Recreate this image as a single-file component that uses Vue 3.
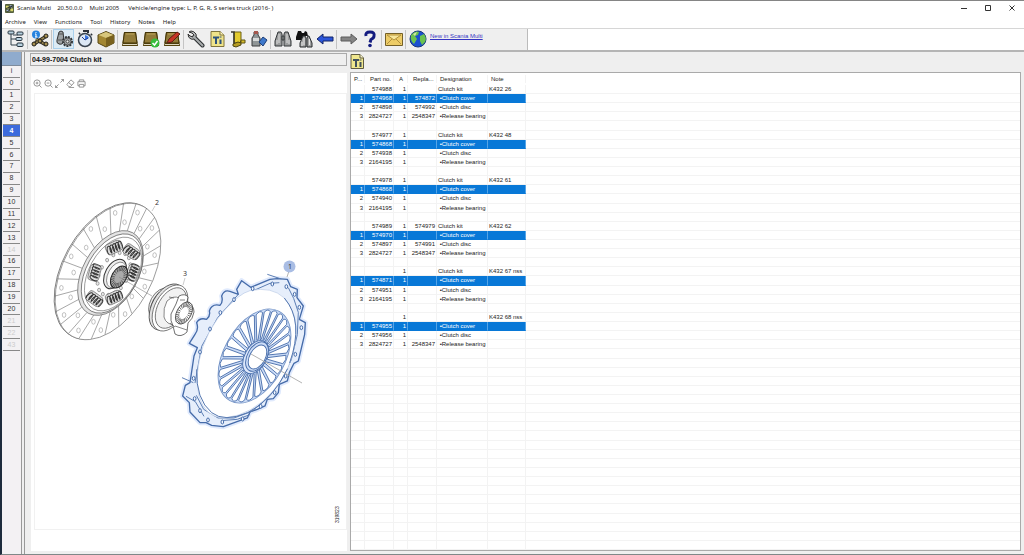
<script setup>
const menus = ['Archive', 'View', 'Functions', 'Tool', 'History', 'Notes', 'Help']

const toolGroups = [
  ['tree'],
  ['infoparts'],
  ['parts', 'clock', 'box'],
  ['book', 'bookok', 'bookedit'],
  ['wrench', 'ti', 'cart', 'bottle'],
  ['binoc', 'binocs', 'back'],
  ['forward', 'help'],
  ['mail'],
  ['globe']
]

const groups = ['i', '0', '1', '2', '3', '4', '5', '6', '7', '8', '9', '10', '11', '12', '13', '14', '16', '17', '18', '19', '20', '21', '22', '43']
const emptyGroups = ['14', '21', '22', '43']

const headings = ['P...', 'Part no.', 'A', 'Repla...', 'Designation', 'Note']
const kits = [
  ['574988', '', 'Clutch kit', 'K432 26', '574968', '574872', '574898', '574992', '2824727', '2548347'],
  ['574977', '', 'Clutch kit', 'K432 48', '574868', '', '574938', '', '2164195', ''],
  ['574978', '', 'Clutch kit', 'K432 61', '574868', '', '574940', '', '2164195', ''],
  ['574989', '574979', 'Clutch kit', 'K432 62', '574970', '', '574897', '574991', '2824727', '2548347'],
  ['', '', 'Clutch kit', 'K432 67 nss', '574871', '', '574951', '', '2164195', ''],
  ['', '', '', 'K432 68 nss', '574955', '', '574956', '', '2824727', '2548347']
]
const rows = []
kits.forEach((k) => {
  rows.push({ cells: ['', k[0], '1', k[1], k[2], k[3]] })
  rows.push({ cells: ['1', k[4], '1', k[5], ' •Clutch cover', ''], on: true })
  rows.push({ cells: ['2', k[6], '1', k[7], ' •Clutch disc', ''] })
  rows.push({ cells: ['3', k[8], '1', k[9], ' •Release bearing', ''] })
  rows.push({ cells: ['', '', '', '', '', ''] })
})
while (rows.length < 51) rows.push({ cells: ['', '', '', '', '', ''] })

/* Geometry of circles seen at an angle: local ellipse tilted 29 degrees. */
const TILT = (29 * Math.PI) / 180
const RATIO = 0.6
function pt(cx, cy, ry, deg) {
  const a = (deg * Math.PI) / 180
  const x = ry * RATIO * Math.cos(a)
  const y = ry * Math.sin(a)
  return [
    +(cx + x * Math.cos(TILT) - y * Math.sin(TILT)).toFixed(2),
    +(cy + x * Math.sin(TILT) + y * Math.cos(TILT)).toFixed(2)
  ]
}
function ring(cx, cy, ry) {
  return { rx: +(ry * RATIO).toFixed(2), ry, transform: `translate(${cx} ${cy}) rotate(29)` }
}
function range(n) {
  return Array.from({ length: n }, (_, i) => i)
}

const discLines = range(24).map((i) => {
  const d = i * 15 + 4
  return 'M' + pt(110.5, 273, 46, d - 1) + 'L' + pt(107.5, 271, 74, d + 1)
}).join('')
const discRivets = range(24).flatMap((i) => {
  const d = i * 15 + 11
  return i % 2 ? [pt(108, 271.5, 66, d)] : [pt(109, 272, 54, d)]
})
const plateHoles = range(16).map((i) => pt(114, 274, 23, i * 22.5))
const springs = [
  [114, 248, -25], [131, 252, 35], [95, 273, -75], [133, 273, -70], [94, 299, 35], [114, 298, -25]
]
const coil = range(5).map((i) => `M${i * 3 - 7} 4c-1.500-3 .5-8 2.500-8s1.500 5 .5 8`).join('')

const petals = range(26).map((i) => {
  const d = (i * 360) / 26
  const a = pt(255.5, 357, 19, d - 2.5)
  const b = pt(254.5, 356, 48, d - 5.5)
  const q = pt(254.5, 356, 52, d)
  const c = pt(254.5, 356, 48, d + 5.5)
  const e = pt(255.5, 357, 19, d + 2.5)
  return `M${a}L${b}Q${q} ${c}L${e}Z`
}).join('')
const splines = (cx, cy, r, n) => range(n).map((i) => 'M' + pt(cx, cy, r * 0.55, (i * 360) / n) + 'L' + pt(cx, cy, r, (i * 360) / n)).join('')
const hubSplines = splines(119, 277, 12, 22)
const bearingSplines = splines(184, 313, 12, 26)

const coverOutline = 'M242 94 L300 70 L322 68 L352 70 L362 92 L382 100 L381 125 L400 150 L388 190 L406 200 L404 235 L385 315 L372 322 L358 350 L352 375 L328 385 L325 410 L310 428 L292 430 L285 450 L262 460 L240 468 L232 486 L160 512 L125 508 L108 500 L90 500 L60 468 L58 440 L38 420 L46 388 L60 380 L72 300 L82 275 L58 262 L75 235 Q87 220 80 200 Q88 184 110 190 Q122 180 118 165 Q125 142 150 148 Q160 138 155 120 Q162 100 180 106 L205 115 L200 100 L215 74 Z'
const tabHoles = [
  [248, 98], [307, 84], [349, 92], [374, 115], [388, 154], [394, 215], [376, 295], [347, 360], [314, 410], [272, 451], [218, 489], [157, 498], [114, 492], [90, 464], [74, 428], [71, 367], [90, 288], [120, 219], [151, 170], [192, 131]
]
</script>

<template>
  <div class="window">
    <header class="titlebar">
      <svg class="appicon" viewBox="0 0 10 10"><rect width="10" height="10" rx="1" fill="#55613f" /><path d="M1 2h3v3H1zM6 5h3v3H6z" fill="#d8d66b" /><path d="M5 1l4 1-2 3zM1 7l3-1 1 3z" fill="#a7b6d8" /><path d="M1 5l8-3M3 9l5-7" stroke="#252c2c" /></svg>
      <span class="app">Scania Multi</span>
      <span class="version">20.50.0.0</span>
      <span class="edition">Multi 2005</span>
      <span class="vehicle">Vehicle/engine type: L, P, G, R, S series truck (2016- )</span>
      <div class="winbtns">
        <button aria-label="Minimize"><svg viewBox="0 0 8 8"><path d="M1 4.500h6" /></svg></button>
        <button aria-label="Maximize"><svg viewBox="0 0 8 8"><path d="M1.500 1.500h5v5h-5z" /></svg></button>
        <button aria-label="Close"><svg viewBox="0 0 8 8"><path d="M1.500 1.500l5 5M6.500 1.500l-5 5" /></svg></button>
      </div>
    </header>

    <nav class="menubar">
      <button v-for="m in menus" :key="m">{{ m }}</button>
    </nav>

    <div class="toolrow">
      <div class="toolbar">
        <template v-for="(g, gi) in toolGroups" :key="gi">
          <i v-if="gi" class="sep"></i>
          <button v-for="t in g" :key="t" class="tool" :class="{ active: t === 'parts' }" :aria-label="t">
            <svg viewBox="0 0 18 18">
              <g v-if="t === 'tree'">
                <path d="M4 4v11h6M4 9h6M6 5h5" fill="none" stroke="#33424d" />
                <g fill="#b9d2e0" stroke="#26343f"><rect x="1" y="1" width="6" height="3" rx="1" /><rect x="10" y="2" width="6" height="3" rx="1" /><rect x="9" y="7.500" width="6" height="3" rx="1" /><rect x="10" y="13" width="6" height="3.500" rx="1" /></g>
              </g>
              <g v-else-if="t === 'infoparts'">
                <path d="M3 14l11-7M5 9l10 6" stroke="#2b2820" stroke-width="3.500" /><path d="M3 14l11-7M5 9l10 6" stroke="#96834c" stroke-width="1.500" />
                <g fill="#a8914f" stroke="#1f1e19"><circle cx="3" cy="14" r="2" /><circle cx="15" cy="6" r="2" /><circle cx="9" cy="11" r="2" /><circle cx="15" cy="14" r="2" /></g>
                <circle cx="5" cy="4.500" r="4" fill="#2583df" /><path d="M5 2v1M4 4h1v3M4 7h2.500" stroke="#fff" fill="none" />
              </g>
              <g v-else-if="t === 'parts'">
                <path d="M4 2q2-2 4 0l1 9q-1 4-5 3-3-1-2-4z" fill="#9da2a4" stroke="#333" /><path d="M4 4h4M3 10h5" stroke="#555" /><circle cx="12.500" cy="11.500" r="4.500" fill="#a8acae" stroke="#303437" stroke-width="2" stroke-dasharray="2 1" /><circle cx="12.500" cy="11.500" r="3.500" fill="#a8acae" stroke="#555" /><circle cx="12.500" cy="11.500" r="1.500" fill="#eee" stroke="#444" />
              </g>
              <g v-else-if="t === 'clock'">
                <path d="M7 1h5v2M3 4l1-1M15 5l1-1" stroke="#2b3038" stroke-width="2" fill="none" /><circle cx="9" cy="10" r="6.500" fill="#dce7f4" stroke="#39434f" stroke-width="1.500" /><path d="M9 10V5a5 5 0 014 3z" fill="#3975df" /><path d="M9 10L6 7M9 10l3-2" stroke="#1c3c98" />
              </g>
              <g v-else-if="t === 'box'">
                <path d="M1 5l8-3.500L17 5v8l-8 4-8-4z" fill="#a38732" stroke="#574713" /><path d="M1.500 5L9 2l7.500 3L9 8z" fill="#d8c77c" /><path d="M9 8l7.500-3v8L9 16.500z" fill="#79611e" />
              </g>
              <g v-else-if="t.startsWith('book')">
                <path d="M3 2h12l2 14H1z" fill="#55440f" /><path d="M3.500 2.500h11L16 13H2z" fill="#927b39" stroke="#433407" /><path d="M5 4h8" stroke="#bba45d" /><path d="M2 14.500h14" stroke="#ddd6bc" />
                <template v-if="t === 'bookok'"><circle cx="13" cy="13" r="4.500" fill="#37bd3c" /><path d="M10.500 13l2 2 3-4" fill="none" stroke="#fff" stroke-width="1.500" /></template>
                <path v-if="t === 'bookedit'" d="M4 13l2-4 8-7 3 2-8 8z" fill="#c53524" stroke="#5d2017" />
              </g>
              <g v-else-if="t === 'wrench'">
                <path d="M7 7l8.500 8.500" stroke="#2d3032" stroke-width="4" stroke-linecap="round" /><path d="M2 2l3 1 2 2-1 2-3-1-2-2q0 4 3 5 2 1 4-1 2-2 1-4-2-3-5-3z" fill="#b5b8b9" stroke="#333" /><path d="M7 7l8.500 8.500" stroke="#a9adae" stroke-width="2" stroke-linecap="round" />
              </g>
              <g v-else-if="t === 'ti'">
                <path d="M3 1.500h9L16 5v11.500H3z" fill="#efe389" stroke="#80743d" /><path d="M12 1.500V5h4" fill="#fff6bc" stroke="#80743d" /><path d="M5 7.500h6M8 7.500V14M12.500 9.500V14" stroke="#2c527d" stroke-width="2" /><path d="M11.500 7h2" stroke="#2c527d" />
              </g>
              <g v-else-if="t === 'cart'">
                <path d="M5 2h7v11H5z" fill="#e3cb2f" stroke="#6d6114" /><path d="M2 2h3v12M11 12h5" stroke="#38382e" stroke-width="1.500" fill="none" /><path d="M4 14l5-2 3 1v2l-5 2-3-1z" fill="#b59c22" stroke="#4c4410" /><path d="M12 10h4v3h-4z" fill="#d7bd2c" stroke="#5d5314" />
              </g>
              <g v-else-if="t === 'bottle'">
                <path d="M4 2h4v3l2 3v8H2V8l2-3z" fill="#8f9596" stroke="#3b3d3e" /><path d="M4 1h4v3H4z" fill="#a5574d" /><path d="M3 8h6v3H3z" fill="#d7dada" /><path d="M9 12l4-5 4 3-4 6z" fill="#3e78cb" stroke="#1d3d75" />
              </g>
              <g v-else-if="t === 'binoc'" fill="#9a9c9c" stroke="#34383a">
                <path d="M4 2h3l1 2v12H1V11zM14 2h-3l-1 2v12h7v-5z" /><path d="M8 6h2v4H8z" /><path d="M5 4v9M3 10v4M13 4v9M15 10v4" stroke="#dedede" />
              </g>
              <g v-else-if="t === 'binocs'">
                <path d="M3 1h3l1 2h2l1-2 2 1 1 4H8v4H1V7z" fill="#111" /><path d="M8 6h2l1 2v9H5v-4zM14 6h-1l-1 2v9h5v-4z" fill="#a3a4a4" stroke="#292c2e" /><path d="M9 8v7M7 12v4M14.500 9v6" stroke="#e4e4e4" />
              </g>
              <path v-else-if="t === 'back'" d="M1 9l6-5v3h10v4H7v3z" fill="#2b55d8" stroke="#122466" />
              <path v-else-if="t === 'forward'" d="M17 9l-6-5v3H1v4h10v3z" fill="#858585" stroke="#5d5d5d" />
              <g v-else-if="t === 'help'"><path d="M5 6q-1-4 4-4 5 0 4 4 0 2-3 3.500l-1 3" fill="none" stroke="#141c80" stroke-width="3" /><circle cx="9" cy="15.500" r="1.800" fill="#141c80" /></g>
              <g v-else-if="t === 'mail'"><path d="M.5 3.500h17v12H.5z" fill="#edcc67" stroke="#746028" /><path d="M2 5l7 5 7-5zM2 14l5-5M16 14l-5-5" fill="#f8e79c" stroke="#b2913d" /></g>
              <g v-else>
                <circle cx="9" cy="9" r="8" fill="#1b50cf" stroke="#18367b" /><path d="M2 5q4-5 8-3l-1 3-3 1 2 3-3 5Q1 11 2 5zM11 6l4-2q3 4 1 8l-3 3-2-4z" fill="#6bc34f" /><path d="M4 4l4-2-2 4z" fill="#d6eaa5" />
              </g>
            </svg>
          </button>
        </template>
        <a href="#">New in Scania Multi</a>
      </div>
    </div>

    <main class="body">
      <aside class="side">
        <div class="sidehead"></div>
        <div class="groups">
          <button v-for="g in groups" :key="g" :class="{ on: g === '4', off: emptyGroups.includes(g) }"><span>{{ g }}</span></button>
        </div>
      </aside>

      <section class="left">
        <input class="kit" value="04-99-7004 Clutch kit" readonly aria-label="Selected part group" />
        <div class="viewer">
          <div class="viewtools">
            <button aria-label="Zoom in"><svg viewBox="0 0 10 10"><circle cx="4.500" cy="4.500" r="3.500" /><path d="M7 7l2.500 2.500M3 4.500h3M4.500 3v3" /></svg></button>
            <button aria-label="Zoom out"><svg viewBox="0 0 10 10"><circle cx="4.500" cy="4.500" r="3.500" /><path d="M7 7l2.500 2.500M3 4.500h3" /></svg></button>
            <button aria-label="Fit"><svg viewBox="0 0 10 10"><path d="M6 4l3.500-3.500M7 .5h2.500V3M4 6L.5 9.500M.5 7v2.500H3" /></svg></button>
            <button aria-label="Erase"><svg viewBox="0 0 10 10"><path d="M1 6l4.500-5L9 4 5 8.500H3zM3 4l3.500 3M3 9.500h6" /></svg></button>
            <button aria-label="Print"><svg viewBox="0 0 10 10"><path d="M2.500 3V1h5v2M2.500 7.500H1V3h8v4.500H7.500M2.500 6h5v3h-5z" /></svg></button>
          </div>
          <div class="frame">
            <svg class="drawing" viewBox="35 94 311 435" preserveAspectRatio="xMinYMin meet">
              <g fill="none" stroke="#6b6b6b" stroke-width=".6">
                <ellipse v-bind="ring(107, 271, 74)" fill="#fff" stroke="#444" />
                <ellipse v-bind="ring(108, 271.500, 74)" fill="#fff" />
                <path :d="discLines" />
                <ellipse v-for="(r, i) in discRivets" :key="i" :cx="r[0]" :cy="r[1]" rx="1.800" ry="2.400" stroke="#999" />
                <ellipse v-bind="ring(110.500, 273, 46)" fill="#e4e4e4" stroke="#555" />
                <ellipse v-bind="ring(112, 273.500, 43)" fill="#fff" stroke="#444" />
                <ellipse v-bind="ring(113, 274, 40)" />
                <ellipse v-for="(r, i) in plateHoles" :key="'h' + i" :cx="r[0]" :cy="r[1]" rx="1.500" ry="1.800" fill="#e9e9e9" />
                <g v-for="(s, i) in springs" :key="'s' + i" :transform="`translate(${s[0]} ${s[1]}) rotate(${s[2]})`">
                  <rect x="-8" y="-6" width="16" height="11" rx="3" fill="#ddd" stroke="#555" />
                  <path :d="coil" stroke="#333" stroke-width="1" />
                </g>
                <ellipse v-bind="ring(115, 274, 16)" fill="#eee" stroke="#333" stroke-width="1" />
                <ellipse v-bind="ring(116.500, 275, 14)" fill="#fafafa" stroke="#555" />
                <ellipse v-bind="ring(119, 277, 12)" fill="#aaa" stroke="#222" stroke-width="1" />
                <path :d="hubSplines" stroke="#222" />
                <path d="M119 277l33 19M194 321l7 4" stroke="#888" />
                <path d="M152 211l3-5M183 285l2-7" stroke="#aaa" />
              </g>
              <g fill="#fff" stroke="#555" stroke-width=".7">
                <ellipse v-bind="ring(160, 303, 16)" fill="#eee" />
                <ellipse v-bind="ring(162, 304, 16)" />
                <ellipse v-bind="ring(167, 307, 25)" fill="#e2e2e2" stroke="#333" />
                <ellipse v-bind="ring(170, 308, 25)" />
                <ellipse v-bind="ring(171, 308, 22)" fill="#f2f2f2" />
                <path d="M167 301q7-6 12-3l4 3-7 24q-10 0-12-8-1-9 3-16z" />
                <path d="M176 304l3-8q6-3 9 1l-1 5q7 3 7 10-1 7-6 11l-1 9q-6 6-12 2l-2-8q-3-5-2-12z" stroke="#333" />
                <path d="M175 326l12 4M180 300h5M169 297l5 1M170 323l5 4" fill="none" />
                <ellipse v-bind="ring(184, 313, 12)" stroke="#333" />
                <path :d="bearingSplines" stroke="#333" />
                <path d="M194 321l12 6" stroke="#e1a2a2" />
              </g>
              <g transform="translate(170 256) scale(.3333)" stroke-linejoin="round">
                <path :d="coverOutline" fill="#e9f0fc" stroke="#e0eafd" stroke-width="15" />
                <path :d="coverOutline" fill="#e6eefb" stroke="#456ba9" stroke-width="4" />
                <path d="M250 104l50-22 28-2M355 95l16 32 14 42-3 67-18 75-28 58-42 54-48 43-54 20-48 0-43-26-22-42M205 115l-62 70-48 86-20 110M48 421l28 16 26 44M36 365l34 15M292 55l42 14M240 476l-38 14-48 4" fill="none" stroke="#5b7db4" stroke-width="3" />
                <path d="M240 104Q305 90 343 126 386 174 377 250 366 340 309 405 247 477 164 486 105 485 87 420 72 355 99 271 130 184 205 123 222 109 240 104Z" fill="#fff" stroke="#b9cae5" stroke-width="2" />
                <path d="M80 340q-3 90 45 130 38 30 108 0 73-35 120-132M343 126q60 70 16 195" fill="none" stroke="#5376b0" stroke-width="3" />
                <ellipse v-for="(h, i) in tabHoles" :key="i" :cx="h[0]" :cy="h[1]" rx="4" ry="6" fill="#f4f8ff" stroke="#456ba9" stroke-width="3" />
              </g>
              <g fill="#cbdcf7" stroke="#456ba9" stroke-width=".9">
                <ellipse v-bind="ring(254.500, 356, 51)" stroke="#7896c7" />
                <path :d="petals" fill="#fff" stroke-linejoin="round" />
                <ellipse v-bind="ring(255.500, 357, 18)" fill="#dce7fb" />
                <ellipse v-bind="ring(257, 356.500, 16)" />
                <ellipse v-bind="ring(257.500, 357, 13)" fill="#fff" />
                <path d="M251 354l51 29" stroke="#aaa" />
                <path d="M287 277l2-6" stroke="#aaa" />
              </g>
              <circle cx="289.500" cy="266.500" r="6" fill="#a9bde4" />
              <g class="callouts"><text x="288" y="269">1</text><text x="155" y="205">2</text><text x="183" y="276">3</text></g>
              <text class="figno" transform="translate(339 523) rotate(-90)">319823</text>
            </svg>
          </div>
        </div>
      </section>

      <section class="right">
        <div class="righttools">
          <button aria-label="Technical information"><svg viewBox="0 0 14 15"><path d="M1 .5h9L13.500 4v10.500H1z" fill="#efe78e" stroke="#5f5b42" /><path d="M10 .5V4h3.500" fill="#fffbd0" stroke="#5f5b42" /><path d="M3 6h6M6 6v7M10.500 8v5" stroke="#41515c" stroke-width="2" /><path d="M9.500 6h2" stroke="#41515c" /></svg></button>
        </div>
        <div class="tablebox">
          <table>
            <thead><tr><th v-for="h in headings" :key="h" scope="col">{{ h }}</th><td></td></tr></thead>
            <tbody>
              <tr v-for="(r, i) in rows" :key="i" :class="{ on: r.on }">
                <td v-for="(c, j) in r.cells" :key="j">{{ c }}</td><td></td>
              </tr>
            </tbody>
          </table>
        </div>
      </section>
    </main>
  </div>
</template>

<style>
html, body, #app { height: 100%; }
</style>

<style scoped>
* { box-sizing: border-box; }
button { border: 0; padding: 0; background: none; color: inherit; font: inherit; line-height: inherit; }
svg { display: block; }
.window {
  display: flex; flex-direction: column; height: 100%; overflow: hidden;
  border-top: 1px solid #858585; border-bottom: 1px solid #7f8888; border-left: 2px solid #1d2b3c;
  background: #efefef; color: #222; font: 6px/10px "Liberation Sans", Arial, sans-serif;
}
.titlebar { display: flex; align-items: center; height: 14px; padding-left: 3px; background: #fff; font-family: "Noto Sans", sans-serif; white-space: pre; flex: none; }
.appicon { width: 9px; height: 9px; margin-right: 3px; }
.app { margin-right: 6px; }
.version { margin-right: 7px; }
.edition { margin-right: 9px; }
.winbtns { display: flex; gap: 16px; margin-left: auto; padding-right: 8px; }
.winbtns svg { width: 8px; height: 8px; fill: none; stroke: #333; }
.menubar { display: flex; gap: 8px; height: 13px; padding: 2px 0 0 3px; background: #fff; font-family: "Noto Sans", sans-serif; flex: none; align-items: flex-start; }
.toolrow { height: 24px; background: #fff; border-top: 1px solid #d6d6d6; border-bottom: 2px solid #b5b5b5; flex: none; }
.toolbar { display: flex; width: 526px; height: 100%; padding-left: 3px; background: #efefef; border-right: 1px solid #bbb; }
.tool { display: grid; place-items: center; width: 21px; height: 20px; }
.tool.active { background: #dcebf5; border: 1px solid #a9d0ec; }
.tool svg { width: 18px; height: 18px; }
.sep { width: 1px; margin: 1px; background: #c4c4c4; }
.toolbar a { margin: 2px 0 0 2px; color: #3434c4; }
.body { display: flex; flex: 1; min-height: 0; }
.side { width: 20px; border-right: 1px solid #999; background: #f3f1f3; flex: none; }
.sidehead { height: 14px; background: #8fabcd; border-bottom: 1px solid #7d8b9c; }
.groups { display: grid; grid-auto-rows: 1fr; height: 285px; color: #333; }
.groups button { display: grid; place-items: center; margin: 0 1px; border-bottom: 1px solid #888; font-size: 7px; }
.groups .on { background: #3d6bdc; color: #fff; font-weight: bold; }
.groups .off { color: #ccc; }
.left { display: flex; flex-direction: column; margin-left: 2px; padding: 1px 0 3px 5px; border-left: 1px solid #999; flex: 0 0 323px; }
.kit { width: 100%; height: 13px; padding: 0 1px; border: 1px solid #aaa; border-radius: 0; background: #efefef; color: #111; font: bold 7px/10px "Liberation Sans", Arial, sans-serif; outline: 0; }
.viewer { display: flex; flex-direction: column; flex: 1; min-height: 0; margin: 7px 0 0 1px; padding: 5px 0 21px 3px; background: #fff; }
.viewtools { display: flex; gap: 1px; margin-left: -1px; }
.viewtools svg { width: 9px; height: 9px; fill: none; stroke: #8c8c8c; stroke-width: 1; }
.viewtools button { width: 10px; height: 10px; }
.frame { flex: 1; min-height: 0; margin-top: 5px; border: 1px solid #f1f1f1; }
.drawing { width: 100%; height: 100%; }
.callouts { font: 7px "Noto Sans", sans-serif; fill: #333; }
.figno { font: 5px "Liberation Sans", Arial, sans-serif; fill: #222; }
.right { display: flex; flex-direction: column; flex: 1; min-width: 0; padding: 2px 3px 3px 3px; }
.righttools svg { width: 14px; height: 15px; }
.righttools { height: 18px; flex: none; }
.tablebox { flex: 1; min-height: 0; border: 1px solid #aaa; background: #fff; }
table { display: flex; flex-direction: column; height: 100%; }
thead { display: block; flex: none; }
thead tr { height: 12px; align-items: center; }
tbody { display: grid; grid-auto-rows: 1fr; flex: 1; min-height: 0; }
tr { display: grid; grid-template-columns: 14px 29px 14px 29px 51px 38px 1fr; }
th, td { padding: 0 1px; line-height: 8px; font-weight: normal; text-align: left; white-space: pre; min-height: 0; border-right: 1px solid #f3f3f3; }
th { padding-left: 3px; }
th:nth-child(2), th:nth-child(3), th:nth-child(4) { padding-left: 5px; }
tbody td { border-bottom: 1px solid #f3f3f3; }
tbody td:nth-child(-n+4) { text-align: right; }
td:last-child { border-right: 0; }
.on td:not(:last-child) { background: #0878d7; border-right-color: #55a4e6; border-bottom-color: #0878d7; color: #fff; }
</style>
